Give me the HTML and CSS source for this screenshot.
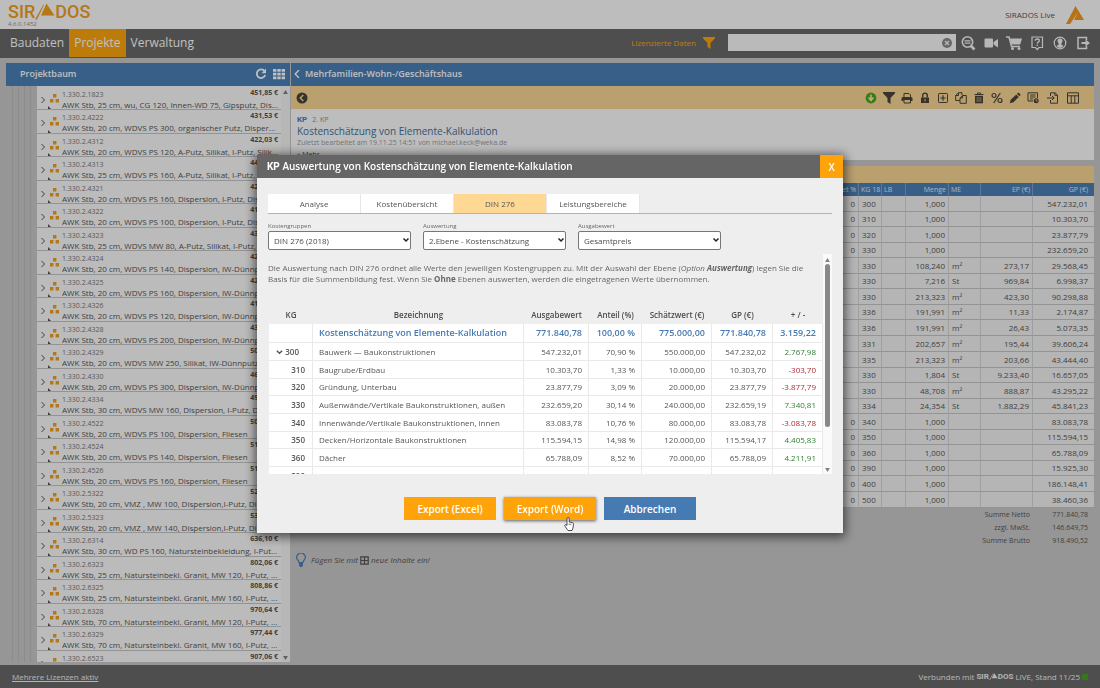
FILE: index.html
```html
<!DOCTYPE html>
<html lang="de">
<head>
<meta charset="utf-8">
<title>SIRADOS Live</title>
<link rel="stylesheet" href="styles.css">
</head>
<body>
<svg class="sprite" aria-hidden="true">
  <symbol id="chev" viewBox="0 0 6 8"><path d="M1.5 1l3 3-3 3" fill="none" stroke="currentColor" stroke-width="1"/></symbol>
  <symbol id="cubes" viewBox="0 0 9 9"><path d="M3 0h3.4v3.4H3zM0 5h3.4v3.4H0zM5.6 5H9v3.4H5.6z" fill="currentColor"/></symbol>
  <symbol id="corner" viewBox="0 0 4 4"><path d="M0 0l4 4H0z" fill="currentColor"/></symbol>
  <symbol id="tri" viewBox="0 0 20 16"><path d="M11.500 0L19.500 12H6zM9 1.500L2 16H0L8.500 1z" fill="currentColor"/></symbol>
  <symbol id="funnel" viewBox="0 0 12 12"><path d="M0 0h12v1.200L7.500 6v6L4.500 10V6L0 1.200z" fill="currentColor"/></symbol>
</svg>

<header class="brandbar">
  <div class="brand">
    <div class="logo"><span>SIR</span><svg><use href="#tri"/></svg><span>DOS</span></div>
    <small>4.6.0.1452</small>
  </div>
  <div class="product">SIRADOS Live
    <svg viewBox="0 0 18 18"><path d="M9.500 0L18 14H8l3.800-7.500L7.500 13l-3.400 5H0z" fill="currentColor"/></svg>
  </div>
</header>

<nav class="mainnav">
  <a href="#">Baudaten</a><a href="#" class="active">Projekte</a><a href="#">Verwaltung</a>
  <div class="tools">
    <span class="licensed">Lizenzierte Daten</span>
    <svg class="filter"><use href="#funnel"/></svg>
    <div class="search">
      <input type="text" aria-label="Suche">
      <svg viewBox="0 0 10 10"><circle cx="5" cy="5" r="5" fill="#8a8a8a"/><path d="M3 3l4 4M7 3l-4 4" stroke="#f4f4f4" stroke-width="1.400"/></svg>
    </div>
    <div class="navicons">
      <button aria-label="Detailsuche"><svg viewBox="0 0 16 16"><circle cx="7.500" cy="7" r="5.200" fill="none" stroke="currentColor" stroke-width="1.600"/><path d="M4.500 5.800h6M4.500 8.200h6" stroke="currentColor" stroke-width="1.200"/><path d="M10.500 10.500l4 4" stroke="currentColor" stroke-width="2.600"/></svg></button>
      <button aria-label="Video"><svg viewBox="0 0 16 16"><path d="M1.500 4.500q0-1 1-1H9q1 0 1 1v7q0 1-1 1H2.500q-1 0-1-1zM10.500 7L15 4v8.500L10.500 9.500z" fill="currentColor"/></svg></button>
      <button aria-label="Warenkorb"><svg viewBox="0 0 16 16"><path d="M0 2h3l2.500 9.500H14" fill="none" stroke="currentColor" stroke-width="1.500"/><path d="M3.800 3.500H16L14.200 9.500H5.500z" fill="currentColor"/><circle cx="6.500" cy="13.500" r="1.500" fill="currentColor"/><circle cx="13" cy="13.500" r="1.500" fill="currentColor"/></svg></button>
      <button aria-label="Hilfe"><svg viewBox="0 0 16 16"><path d="M3 2h10.500v10.500H10L8.200 14.500 6.500 12.500H3z" fill="none" stroke="currentColor" stroke-width="1.200"/><path d="M6.300 5.700q0-1.700 2-1.700t2 1.600q0 1-1 1.500t-1 1.500M8.300 9.600v1.500" fill="none" stroke="currentColor" stroke-width="1.300"/></svg></button>
      <button aria-label="Benutzer"><svg viewBox="0 0 16 16"><circle cx="8" cy="8" r="5.800" fill="none" stroke="currentColor" stroke-width="1.200"/><path d="M8 3.500a2.300 2.500 0 0 1 1.600 4.500l-.3 1.600 2.200 1.500Q10 13 8 13t-3.500-1.900l2.200-1.500L6.400 8A2.300 2.500 0 0 1 8 3.500z" fill="currentColor"/></svg></button>
      <button aria-label="Abmelden"><svg viewBox="0 0 16 16"><path d="M11.500 5V2.500H3v11h8.500V11" fill="none" stroke="currentColor" stroke-width="1.500"/><path d="M6.500 7h4V4.500L15 8l-4.500 3.500V9h-4z" fill="currentColor"/></svg></button>
    </div>
  </div>
</nav>

<main class="workspace">
  <section class="tree">
    <header class="panelhead">
      <h2>Projektbaum</h2>
      <button aria-label="Aktualisieren"><svg viewBox="0 0 12 12"><path d="M9.600 3.200A4.300 4.300 0 1 0 10.200 7" fill="none" stroke="currentColor" stroke-width="1.800"/><path d="M11 .5v4.700H6.500z" fill="currentColor"/></svg></button>
      <button aria-label="Kacheln"><svg viewBox="0 0 12 12"><path d="M0 1h3.400v2.800H0zM4.300 1h3.400v2.800H4.300zM8.600 1H12v2.800H8.600zM0 4.700h3.400v2.800H0zM4.300 4.700h3.400v2.800H4.300zM8.600 4.700H12v2.800H8.600zM0 8.400h3.400v2.800H0zM4.300 8.400h3.400v2.800H4.300zM8.600 8.400H12v2.800H8.600z" fill="currentColor"/></svg></button>
    </header>
    <div class="treebody">
      <div class="guides"><i></i><i></i><i></i><i></i></div>
      <ul class="items">
        <li><svg class="chev"><use href="#chev"/></svg><svg class="cubes"><use href="#cubes"/></svg><svg class="corner"><use href="#corner"/></svg><span class="code">1.330.2.1823</span><b>451,85 €</b><p>AWK Stb, 25 cm, wu, CG 120, Innen-WD 75, Gipsputz, Dis...</p></li>
        <li><svg class="chev"><use href="#chev"/></svg><svg class="cubes"><use href="#cubes"/></svg><svg class="corner"><use href="#corner"/></svg><span class="code">1.330.2.4222</span><b>431,53 €</b><p>AWK Stb, 20 cm, WDVS PS 300, organischer Putz, Disper...</p></li>
        <li><svg class="chev"><use href="#chev"/></svg><svg class="cubes"><use href="#cubes"/></svg><svg class="corner"><use href="#corner"/></svg><span class="code">1.330.2.4312</span><b>422,03 €</b><p>AWK Stb, 20 cm, WDVS PS 120, A-Putz, Silikat, I-Putz, Silik...</p></li>
        <li><svg class="chev"><use href="#chev"/></svg><svg class="cubes"><use href="#cubes"/></svg><svg class="corner"><use href="#corner"/></svg><span class="code">1.330.2.4313</span><b>441,20 €</b><p>AWK Stb, 25 cm, WDVS PS 160, A-Putz, Silikat, I-Putz, Silik...</p></li>
        <li><svg class="chev"><use href="#chev"/></svg><svg class="cubes"><use href="#cubes"/></svg><svg class="corner"><use href="#corner"/></svg><span class="code">1.330.2.4321</span><b>427,15 €</b><p>AWK Stb, 20 cm, WDVS PS 160, Dispersion, I-Putz, Disper...</p></li>
        <li><svg class="chev"><use href="#chev"/></svg><svg class="cubes"><use href="#cubes"/></svg><svg class="corner"><use href="#corner"/></svg><span class="code">1.330.2.4322</span><b>411,90 €</b><p>AWK Stb, 20 cm, WDVS PS 100, Dispersion, I-Putz, Disper...</p></li>
        <li><svg class="chev"><use href="#chev"/></svg><svg class="cubes"><use href="#cubes"/></svg><svg class="corner"><use href="#corner"/></svg><span class="code">1.330.2.4323</span><b>432,60 €</b><p>AWK Stb, 25 cm, WDVS MW 80, A-Putz, Silikat, I-Putz, Silik...</p></li>
        <li><svg class="chev"><use href="#chev"/></svg><svg class="cubes"><use href="#cubes"/></svg><svg class="corner"><use href="#corner"/></svg><span class="code">1.330.2.4324</span><b>421,75 €</b><p>AWK Stb, 20 cm, WDVS PS 140, Dispersion, IW-Dünnputz...</p></li>
        <li><svg class="chev"><use href="#chev"/></svg><svg class="cubes"><use href="#cubes"/></svg><svg class="corner"><use href="#corner"/></svg><span class="code">1.330.2.4325</span><b>425,30 €</b><p>AWK Stb, 20 cm, WDVS PS 160, Dispersion, IW-Dünnputz...</p></li>
        <li><svg class="chev"><use href="#chev"/></svg><svg class="cubes"><use href="#cubes"/></svg><svg class="corner"><use href="#corner"/></svg><span class="code">1.330.2.4326</span><b>418,40 €</b><p>AWK Stb, 20 cm, WDVS PS 120, Dispersion, IW-Dünnputz...</p></li>
        <li><svg class="chev"><use href="#chev"/></svg><svg class="cubes"><use href="#cubes"/></svg><svg class="corner"><use href="#corner"/></svg><span class="code">1.330.2.4328</span><b>430,10 €</b><p>AWK Stb, 20 cm, WDVS PS 200, Dispersion, IW-Dünnputz...</p></li>
        <li><svg class="chev"><use href="#chev"/></svg><svg class="cubes"><use href="#cubes"/></svg><svg class="corner"><use href="#corner"/></svg><span class="code">1.330.2.4329</span><b>503,25 €</b><p>AWK Stb, 20 cm, WDVS MW 250, Silikat, IW-Dünnputz, Sil...</p></li>
        <li><svg class="chev"><use href="#chev"/></svg><svg class="cubes"><use href="#cubes"/></svg><svg class="corner"><use href="#corner"/></svg><span class="code">1.330.2.4330</span><b>462,80 €</b><p>AWK Stb, 20 cm, WDVS PS 300, Dispersion, IW-Dünnputz...</p></li>
        <li><svg class="chev"><use href="#chev"/></svg><svg class="cubes"><use href="#cubes"/></svg><svg class="corner"><use href="#corner"/></svg><span class="code">1.330.2.4334</span><b>497,35 €</b><p>AWK Stb, 30 cm, WDVS MW 160, Dispersion, I-Putz, Disp...</p></li>
        <li><svg class="chev"><use href="#chev"/></svg><svg class="cubes"><use href="#cubes"/></svg><svg class="corner"><use href="#corner"/></svg><span class="code">1.330.2.4522</span><b>508,70 €</b><p>AWK Stb, 20 cm, WDVS PS 100, Dispersion, Fliesen</p></li>
        <li><svg class="chev"><use href="#chev"/></svg><svg class="cubes"><use href="#cubes"/></svg><svg class="corner"><use href="#corner"/></svg><span class="code">1.330.2.4524</span><b>512,45 €</b><p>AWK Stb, 20 cm, WDVS PS 140, Dispersion, Fliesen</p></li>
        <li><svg class="chev"><use href="#chev"/></svg><svg class="cubes"><use href="#cubes"/></svg><svg class="corner"><use href="#corner"/></svg><span class="code">1.330.2.4526</span><b>516,20 €</b><p>AWK Stb, 20 cm, WDVS PS 160, Dispersion, Fliesen</p></li>
        <li><svg class="chev"><use href="#chev"/></svg><svg class="cubes"><use href="#cubes"/></svg><svg class="corner"><use href="#corner"/></svg><span class="code">1.330.2.5322</span><b>521,60 €</b><p>AWK Stb, 20 cm, VMZ , MW 100, Dispersion,I-Putz, Disp...</p></li>
        <li><svg class="chev"><use href="#chev"/></svg><svg class="cubes"><use href="#cubes"/></svg><svg class="corner"><use href="#corner"/></svg><span class="code">1.330.2.5323</span><b>530,95 €</b><p>AWK Stb, 20 cm, VMZ , MW 140, Dispersion,I-Putz, Disp...</p></li>
        <li><svg class="chev"><use href="#chev"/></svg><svg class="cubes"><use href="#cubes"/></svg><svg class="corner"><use href="#corner"/></svg><span class="code">1.330.2.6314</span><b>636,10 €</b><p>AWK Stb, 30 cm, WD PS 160, Natursteinbekleidung, I-Put...</p></li>
        <li><svg class="chev"><use href="#chev"/></svg><svg class="cubes"><use href="#cubes"/></svg><svg class="corner"><use href="#corner"/></svg><span class="code">1.330.2.6323</span><b>802,06 €</b><p>AWK Stb, 25 cm, Natursteinbekl. Granit, MW 120, I-Putz, ...</p></li>
        <li><svg class="chev"><use href="#chev"/></svg><svg class="cubes"><use href="#cubes"/></svg><svg class="corner"><use href="#corner"/></svg><span class="code">1.330.2.6325</span><b>808,86 €</b><p>AWK Stb, 25 cm, Natursteinbekl. Granit, MW 160, I-Putz, ...</p></li>
        <li><svg class="chev"><use href="#chev"/></svg><svg class="cubes"><use href="#cubes"/></svg><svg class="corner"><use href="#corner"/></svg><span class="code">1.330.2.6328</span><b>970,64 €</b><p>AWK Stb, 70 cm, Natursteinbekl. Granit, MW 120, I-Putz, ...</p></li>
        <li><svg class="chev"><use href="#chev"/></svg><svg class="cubes"><use href="#cubes"/></svg><svg class="corner"><use href="#corner"/></svg><span class="code">1.330.2.6329</span><b>977,44 €</b><p>AWK Stb, 70 cm, Natursteinbekl. Granit, MW 160, I-Putz, ...</p></li>
        <li><svg class="chev"><use href="#chev"/></svg><svg class="cubes"><use href="#cubes"/></svg><svg class="corner"><use href="#corner"/></svg><span class="code">1.330.2.6523</span><b>907,06 €</b></li>
      </ul>
      <div class="scroll"><svg viewBox="0 0 6 5"><path d="M3 0l3 5H0z"/></svg><svg viewBox="0 0 6 5"><path d="M0 0h6L3 5z"/></svg></div>
    </div>
  </section>

  <section class="project">
    <header class="panelhead titlehead">
      <button aria-label="Zurück"><svg viewBox="0 0 6 8"><path d="M5 0L1.200 4 5 8" fill="none" stroke="currentColor" stroke-width="1.400"/></svg></button>
      <h2>Mehrfamilien-Wohn-/Geschäftshaus</h2>
    </header>
    <div class="toolbar">
      <button class="back" aria-label="Vorheriges"><svg viewBox="0 0 12 12"><circle cx="6" cy="6" r="5.500" fill="currentColor"/><path d="M7.300 3L4.300 6l3 3" fill="none" stroke="#f8d595" stroke-width="1.500"/></svg></button>
      <div class="icons">
        <button aria-label="Herunterladen"><svg viewBox="0 0 12 12"><circle cx="6" cy="6" r="5.400" fill="#46a818"/><path d="M6 2.500v5M3.500 5.500L6 8.500l2.500-3" fill="none" stroke="#f8e5b5" stroke-width="1.600"/></svg></button>
        <button aria-label="Filter"><svg><use href="#funnel"/></svg></button>
        <button aria-label="Drucken"><svg viewBox="0 0 12 12"><path d="M3 5V1.500h5L9.500 3v2" fill="none" stroke="currentColor"/><path d="M.5 9V6.500q0-1.500 1.500-1.500h8q1.500 0 1.500 1.500V9H9.500V8h-7v1z" fill="currentColor"/><path d="M3 8v3h6.500V8" fill="none" stroke="currentColor"/></svg></button>
        <button aria-label="Sperren"><svg viewBox="0 0 12 12"><path d="M2 5.500h8V11H2z" fill="currentColor"/><path d="M3.700 5.500V3.400a2.300 2.300 0 0 1 4.600 0v2.100" fill="none" stroke="currentColor" stroke-width="1.400"/><path d="M6 7v2.500" stroke="#f8d595"/></svg></button>
        <button aria-label="Hinzufügen"><svg viewBox="0 0 12 12"><rect x="1.500" y="1.500" width="9" height="9" rx=".8" fill="none" stroke="currentColor"/><path d="M6 3.300v5.400M3.300 6h5.400" stroke="currentColor" stroke-width="1.200"/></svg></button>
        <button aria-label="Kopieren"><svg viewBox="0 0 12 12"><path d="M5 8.500H.7V3.500L3.500.7H7V3M.7 3.500h2.800V.7M5 11.300V6l2.600-2.500h3.700v7.800zM5 6h2.600V3.500" fill="none" stroke="currentColor"/></svg></button>
        <button aria-label="Löschen"><svg viewBox="0 0 12 12"><path d="M1.500 2.500h9M4.500 2.300V1h3v1.300" fill="none" stroke="currentColor"/><path d="M2 3.800h8V11.300H2z" fill="currentColor"/><path d="M4.200 5v5M6 5v5M7.800 5v5" stroke="#d9ba82" stroke-width=".7"/></svg></button>
        <button aria-label="Prozent"><svg viewBox="0 0 12 12"><circle cx="3" cy="3.500" r="2" fill="none" stroke="currentColor" stroke-width="1.200"/><circle cx="9" cy="8.500" r="2" fill="none" stroke="currentColor" stroke-width="1.200"/><path d="M9.300 1L2.700 11" stroke="currentColor" stroke-width="1.200"/></svg></button>
        <button aria-label="Bearbeiten"><svg viewBox="0 0 12 12"><path d="M.8 11.200l.9-3.500 5.600-5.300 2.500 2.500-5.400 5.400zM8 1.700l.7-.7q.7-.5 1.300 0l1.200 1.200q.5.600 0 1.200l-.8.800z" fill="currentColor"/></svg></button>
        <button aria-label="Protokoll"><svg viewBox="0 0 12 12"><path d="M6 9H1V.8h9.500V6M3 3h5.500M3 5h5.500M3 7h3" fill="none" stroke="currentColor"/><circle cx="9.200" cy="8.800" r="2.500" fill="currentColor"/><path d="M9.200 7v2h1.500" fill="none" stroke="#f8d595" stroke-width=".7"/></svg></button>
      </div>
      <div class="icons wide">
        <button aria-label="Importieren"><svg viewBox="0 0 12 12"><path d="M3.500 4V.8H8L10.500 3v8.200h-7V8M0 6h7M5 4l2.200 2L5 8M7.800.8v2.500h2.700" fill="none" stroke="currentColor"/></svg></button>
        <button aria-label="Spalten"><svg viewBox="0 0 12 12"><path d="M.5.800h11v10.400H.5zM.5 3.800h11M4.200 3.800v7.400M7.800 3.800v7.400" fill="none" stroke="currentColor"/></svg></button>
      </div>
    </div>
    <div class="summary">
      <div class="kind"><b>KP</b><span>2. KP</span></div>
      <h1>Kostenschätzung von Elemente-Kalkulation</h1>
      <p>Zuletzt bearbeitet am 19.11.25 14:51 von michael.keck@weka.de</p>
      <a href="#">» Mehr</a>
    </div>
    <div class="gridbar"></div>
    <table class="positions">
      <colgroup><col><col class="w-pct"><col class="w-kg"><col class="w-lb"><col class="w-qty"><col class="w-me"><col class="w-ep"><col class="w-gp"></colgroup>
      <thead><tr><th></th><th class="n">Budget %</th><th>KG 18</th><th>LB</th><th class="n">Menge</th><th>ME</th><th class="n">EP (€)</th><th class="n">GP (€)</th></tr></thead>
      <tbody>
        <tr><td></td><td>0</td><td>300</td><td></td><td>1,000</td><td></td><td></td><td>547.232,01</td></tr>
        <tr><td></td><td>0</td><td>310</td><td></td><td>1,000</td><td></td><td></td><td>10.303,70</td></tr>
        <tr><td></td><td>0</td><td>320</td><td></td><td>1,000</td><td></td><td></td><td>23.877,79</td></tr>
        <tr><td></td><td>0</td><td>330</td><td></td><td>1,000</td><td></td><td></td><td>232.659,20</td></tr>
        <tr><td></td><td></td><td>330</td><td></td><td>108,240</td><td>m²</td><td>273,17</td><td>29.568,45</td></tr>
        <tr><td></td><td></td><td>330</td><td></td><td>7,216</td><td>St</td><td>969,84</td><td>6.998,37</td></tr>
        <tr><td></td><td></td><td>330</td><td></td><td>213,323</td><td>m²</td><td>423,30</td><td>90.298,88</td></tr>
        <tr><td></td><td></td><td>336</td><td></td><td>191,991</td><td>m²</td><td>11,33</td><td>2.174,87</td></tr>
        <tr><td></td><td></td><td>336</td><td></td><td>191,991</td><td>m²</td><td>26,43</td><td>5.073,35</td></tr>
        <tr><td></td><td></td><td>331</td><td></td><td>202,657</td><td>m²</td><td>195,44</td><td>39.606,24</td></tr>
        <tr><td></td><td></td><td>335</td><td></td><td>213,323</td><td>m²</td><td>203,66</td><td>43.444,40</td></tr>
        <tr><td></td><td></td><td>330</td><td></td><td>1,804</td><td>St</td><td>9.233,40</td><td>16.657,05</td></tr>
        <tr><td></td><td></td><td>330</td><td></td><td>48,708</td><td>m²</td><td>888,87</td><td>43.295,22</td></tr>
        <tr><td></td><td></td><td>334</td><td></td><td>24,354</td><td>St</td><td>1.882,29</td><td>45.841,23</td></tr>
        <tr><td></td><td>0</td><td>340</td><td></td><td>1,000</td><td></td><td></td><td>83.083,78</td></tr>
        <tr><td></td><td>0</td><td>350</td><td></td><td>1,000</td><td></td><td></td><td>115.594,15</td></tr>
        <tr><td></td><td>0</td><td>360</td><td></td><td>1,000</td><td></td><td></td><td>65.788,09</td></tr>
        <tr><td></td><td>0</td><td>390</td><td></td><td>1,000</td><td></td><td></td><td>15.925,30</td></tr>
        <tr><td></td><td>0</td><td>400</td><td></td><td>1,000</td><td></td><td></td><td>186.148,41</td></tr>
        <tr><td></td><td>0</td><td>500</td><td></td><td>1,000</td><td></td><td></td><td>38.460,36</td></tr>
      </tbody>
    </table>
    <dl class="totals">
      <dt>Summe Netto</dt><dd>771.840,78</dd>
      <dt>zzgl. MwSt.</dt><dd>146.649,75</dd>
      <dt>Summe Brutto</dt><dd>918.490,52</dd>
    </dl>
    <p class="hint">
      <svg class="bulb" viewBox="0 0 10 14"><path d="M3 9.500Q3 8.300 1.800 7A4.200 4.200 0 1 1 8.200 7Q7 8.300 7 9.500z" fill="none" stroke="currentColor" stroke-width="1.200"/><path d="M3 10h4v2.500L5.800 14H4.200L3 12.500z" fill="currentColor"/></svg>
      Fügen Sie mit <svg class="plus" viewBox="0 0 9 9"><path d="M.8.800h7.400v7.400H.800zM4.500.800v7.400M.800 4.500h7.400" fill="none" stroke="currentColor" stroke-width="1.200"/></svg> neue Inhalte ein!
    </p>
  </section>
</main>

<footer class="statusbar">
  <a href="#">Mehrere Lizenzen aktiv</a>
  <div>Verbunden mit <span class="minilogo"><b>SIR</b><svg><use href="#tri"/></svg><b>DOS</b></span> LIVE, Stand 11/25 <i></i></div>
</footer>

<div class="backdrop">
  <div class="dialog" role="dialog" aria-labelledby="dlg-title">
    <header class="dlghead">
      <h2 id="dlg-title"><b>KP</b> Auswertung von Kostenschätzung von Elemente-Kalkulation</h2>
      <button aria-label="Schließen">X</button>
    </header>
    <div class="dlgbody">
      <div class="tabs" role="tablist">
        <button role="tab">Analyse</button><button role="tab">Kostenübersicht</button><button role="tab" class="active" aria-selected="true">DIN 276</button><button role="tab">Leistungsbereiche</button>
      </div>
      <div class="fields">
        <div class="field"><label for="groups">Kostengruppen</label><select id="groups"><option>DIN 276 (2018)</option></select><svg viewBox="0 0 8 6"><path d="M1.500 1.500L4 4l2.500-2.500" fill="none" stroke="currentColor" stroke-width="1.500"/></svg></div>
        <div class="field"><label for="level">Auswertung</label><select id="level"><option>2.Ebene - Kostenschätzung</option></select><svg viewBox="0 0 8 6"><path d="M1.500 1.500L4 4l2.500-2.500" fill="none" stroke="currentColor" stroke-width="1.500"/></svg></div>
        <div class="field"><label for="value">Ausgabewert</label><select id="value"><option>Gesamtpreis</option></select><svg viewBox="0 0 8 6"><path d="M1.500 1.500L4 4l2.500-2.500" fill="none" stroke="currentColor" stroke-width="1.500"/></svg></div>
      </div>
      <div class="viewport">
        <div class="content">
          <p>Die Auswertung nach DIN 276 ordnet alle Werte den jeweiligen Kostengruppen zu. Mit der Auswahl der Ebene (<i>Option <b>Auswertung</b></i>) legen Sie die Basis für die Summenbildung fest. Wenn Sie <b>Ohne</b> Ebenen auswerten, werden die eingetragenen Werte übernommen.</p>
          <table class="costs">
            <colgroup><col class="c-kg"><col><col class="c-out"><col class="c-part"><col class="c-est"><col class="c-gp"><col class="c-diff"></colgroup>
            <thead><tr><th>KG</th><th>Bezeichnung</th><th>Ausgabewert</th><th>Anteil (%)</th><th>Schätzwert (€)</th><th>GP (€)</th><th>+ / -</th></tr></thead>
            <tbody>
              <tr class="total"><td></td><td>Kostenschätzung von Elemente-Kalkulation</td><td>771.840,78</td><td>100,00 %</td><td>775.000,00</td><td>771.840,78</td><td>3.159,22</td></tr>
              <tr class="group"><td><svg viewBox="0 0 8 6"><path d="M1 1.500L4 4.500l3-3" fill="none" stroke="currentColor" stroke-width="1.600"/></svg> 300</td><td>Bauwerk — Baukonstruktionen</td><td>547.232,01</td><td>70,90 %</td><td>550.000,00</td><td>547.232,02</td><td class="pos">2.767,98</td></tr>
              <tr><td>310</td><td>Baugrube/Erdbau</td><td>10.303,70</td><td>1,33 %</td><td>10.000,00</td><td>10.303,70</td><td class="neg">-303,70</td></tr>
              <tr><td>320</td><td>Gründung, Unterbau</td><td>23.877,79</td><td>3,09 %</td><td>20.000,00</td><td>23.877,79</td><td class="neg">-3.877,79</td></tr>
              <tr><td>330</td><td>Außenwände/Vertikale Baukonstruktionen, außen</td><td>232.659,20</td><td>30,14 %</td><td>240.000,00</td><td>232.659,19</td><td class="pos">7.340,81</td></tr>
              <tr><td>340</td><td>Innenwände/Vertikale Baukonstruktionen, innen</td><td>83.083,78</td><td>10,76 %</td><td>80.000,00</td><td>83.083,78</td><td class="neg">-3.083,78</td></tr>
              <tr><td>350</td><td>Decken/Horizontale Baukonstruktionen</td><td>115.594,15</td><td>14,98 %</td><td>120.000,00</td><td>115.594,17</td><td class="pos">4.405,83</td></tr>
              <tr><td>360</td><td>Dächer</td><td>65.788,09</td><td>8,52 %</td><td>70.000,00</td><td>65.788,09</td><td class="pos">4.211,91</td></tr>
              <tr><td>390</td><td>Sonstige Maßnahmen für Baukonstruktionen</td><td>15.925,30</td><td>2,06 %</td><td>10.000,00</td><td>15.925,30</td><td class="neg">-5.925,30</td></tr>
            </tbody>
          </table>
        </div>
        <div class="scroll"><svg viewBox="0 0 6 5"><path d="M3 0l3 5H0z"/></svg><i></i><svg viewBox="0 0 6 5"><path d="M0 0h6L3 5z"/></svg></div>
      </div>
      <div class="actions">
        <button>Export (Excel)</button>
        <button class="hover">Export (Word)<svg class="cursor" viewBox="0 0 10 14"><path d="M3 8V1.800q0-1.300 1.100-1.300t1.100 1.300V5l3.300.7q1.100.3 1 1.500L9 11l-1 2.500H4L1 9.300Q.3 8.200 1.200 7.700T3 8.500z" fill="#fff" stroke="#222" stroke-width=".8"/><path d="M5.200 6.500V8M6.800 6.700V8.200" stroke="#222" stroke-width=".6"/></svg></button>
        <button class="cancel">Abbrechen</button>
      </div>
    </div>
  </div>
</div>
</body>
</html>
```

FILE: styles.css
```css
* { box-sizing: border-box; margin: 0; padding: 0; }
body {
  display: flex; flex-direction: column; height: 100vh; overflow: hidden;
  font: 8px/12px "Open Sans", "Noto Sans", sans-serif; color: #555; background: #c9c9c9;
}
button { font: inherit; color: inherit; background: none; border: 0; display: block; }
svg { display: block; flex: none; }
ul { list-style: none; }
.sprite { position: absolute; width: 0; height: 0; }

.brandbar { display: flex; justify-content: space-between; height: 29px; background: #fcfcfc; padding: 0 16px 0 8px; }
.brand { padding-top: 3px; }
.logo { display: flex; align-items: center; height: 18px; color: #f0a020; font: 500 18px/18px Roboto, "Liberation Sans", sans-serif; }
.logo svg { width: 20px; height: 17px; align-self: flex-start; }
.brand small { display: block; font-size: 6px; line-height: 7px; color: #909090; }
.product { display: flex; align-items: center; gap: 11px; color: #555; }
.product svg { width: 18px; height: 18px; color: #f3981c; }

.mainnav { display: flex; height: 29px; background: #696969; padding-left: 5px; }
.mainnav a { display: flex; align-items: center; height: 28px; padding: 0 5px; color: #fff; font-size: 12px; text-decoration: none; }
.mainnav a.active { background: #fca60c; }
.tools { display: flex; align-items: center; margin-left: auto; padding: 0 9px 2px 0; color: #f4f4f4; }
.licensed { color: #fca60c; }
.filter { width: 12px; height: 12px; margin: 0 13px 0 7px; color: #fca60c; }
.search { display: flex; align-items: center; width: 228px; height: 17px; padding-right: 4px; background: #f8f8f8; }
.search input { flex: 1; border: 0; background: none; font: inherit; min-width: 0; }
.search svg { width: 10px; height: 10px; }
.navicons { display: flex; gap: 7px; padding-left: 4px; }
.navicons svg { width: 16px; height: 16px; }

.workspace { display: flex; flex: 1; min-height: 0; gap: 1px; padding: 5px 6px 0; }
.panelhead { display: flex; align-items: center; gap: 6px; height: 23px; padding: 0 5px 1px 14px; background: #4b7fb5; color: #fff; }
.panelhead h2 { font-size: 9px; font-weight: 600; }
.panelhead svg { width: 12px; height: 12px; }
.tree { display: flex; flex-direction: column; width: 284px; }
.tree h2 { flex: 1; }
.treebody { display: flex; flex: 1; min-height: 0; margin-bottom: 3px; }
.guides { display: flex; gap: 5px; width: 31px; padding-left: 6px; }
.guides i { width: 1px; background: #bbb; }
.items { flex: 1; overflow: hidden; background: #fafafa; padding-top: 1px; }
.items li {
  display: grid; grid-template: 12px 11px / 9px 16px 1fr auto; position: relative;
  height: 24px; padding-right: 3px; border-bottom: 1px solid #c4c4c4; line-height: 12px;
}
.items li:nth-child(odd) { height: 23px; }
.items .chev { width: 6px; height: 8px; grid-area: 1 / 1 / 3; align-self: center; margin-left: 3px; margin-top: 2px; }
.items .cubes { width: 9px; height: 9px; grid-area: 1 / 2 / 3; align-self: center; justify-self: center; color: #f0a020; }
.items .corner { width: 3px; height: 3px; position: absolute; left: 11px; bottom: 0; }
.code { grid-area: 1 / 3; font-size: 7px; line-height: 15px; color: #777; }
.items b { grid-area: 1 / 4; font-size: 7px; }
.items p { grid-area: 2 / 3 / 3 / 5; white-space: nowrap; overflow: hidden; line-height: 12px; }
.scroll { display: flex; flex-direction: column; justify-content: space-between; align-items: center; width: 9px; padding: 4px 0 2px; background: #f4f4f4; }
.scroll svg { width: 5px; height: 4px; fill: #808080; }

.project { flex: 1; min-width: 0; }
.titlehead { padding-left: 3px; gap: 5px; }
.titlehead svg { width: 6px; height: 8px; }
.toolbar { display: flex; align-items: center; gap: 8px; height: 23px; padding: 0 15px 0 5px; background: #f8d595; color: #4a4438; }
.toolbar svg { width: 12px; height: 12px; }
.icons { display: flex; gap: 6px; }
.icons.wide { gap: 8px; }
.back { margin-right: auto; }
.summary { height: 51px; padding: 5px 6px 0; background: #fcfcfc; overflow: hidden; }
.kind { display: flex; gap: 5px; line-height: 11px; color: #909090; font-size: 7px; }
.kind b { font: bold 8px/11px Roboto, "Liberation Sans", sans-serif; color: #4b7fb5; }
.summary h1 { font-size: 10px; line-height: 13px; font-weight: 400; color: #4470a0; }
.summary p { font-size: 7px; line-height: 10px; color: #999; }
.summary a { color: #555; text-decoration: none; font-size: 7px; }
.gridbar { height: 17px; margin-top: 6px; background: #f8d595; }
.positions { width: 100%; table-layout: fixed; border-collapse: separate; border-spacing: 0; }
.w-pct { width: 60px; } .w-kg { width: 23px; } .w-lb { width: 24px; } .w-qty { width: 43px; }
.w-me { width: 32px; } .w-ep { width: 52px; } .w-gp { width: 61px; }
.positions th { height: 13px; background: #4b7fb5; color: #e8eef5; font-weight: 400; font-size: 7px; line-height: 12px; text-align: left; padding: 0 2px; border-right: 1px solid #7ba0c8; white-space: nowrap; }
.positions td { height: 15px; background: #f2f2f2; border-right: 1px solid #d4d4d4; border-bottom: 1px solid #c4c4c4; padding: 0 3px; line-height: 14px; text-align: right; }
.positions tr:nth-child(odd) td, .positions tr:nth-child(10n) td { height: 16px; }
.positions td:nth-child(3), .positions td:nth-child(6) { text-align: left; }
.positions th.n { text-align: right; }
.positions td:last-child, .positions th:last-child { padding-right: 6px; border-right: 0; }
.totals { display: grid; grid-template-columns: 1fr 58px; row-gap: 1px; padding: 1px 6px 0 0; text-align: right; line-height: 12px; font-size: 7px; }
.hint { display: flex; align-items: center; gap: 2px; padding: 6px 5px; font-style: italic; }
.bulb { width: 10px; height: 14px; margin-right: 3px; color: #4b7fb5; }
.plus { width: 9px; height: 9px; }

.statusbar { display: flex; align-items: center; justify-content: space-between; height: 23px; padding: 0 12px; background: #696969; color: #f0f0f0; }
.statusbar a { color: inherit; }
.statusbar div { display: flex; align-items: center; gap: 2px; }
.statusbar i { width: 6px; height: 6px; background: #48a020; }
.minilogo { display: flex; align-items: center; font: 8px/12px Roboto, "Liberation Sans", sans-serif; }
.minilogo svg { width: 9px; height: 7px; }

.backdrop { position: fixed; inset: 0; display: flex; align-items: center; justify-content: center; background: rgba(0, 0, 0, .25); }
.dialog { width: 586px; max-width: 96vw; background: #eee; box-shadow: 0 2px 10px 2px rgba(0, 0, 0, .6); }
.dlghead { display: flex; justify-content: space-between; height: 23px; background: #656565; color: #fff; }
.dlghead h2 { padding-left: 10px; font-size: 10px; font-weight: 600; line-height: 23px; }
.dlghead b { font: bold 10px/22px Roboto, "Liberation Sans", sans-serif; }
.dlghead button { width: 23px; background: #ffa30a; font-size: 10px; font-weight: 600; }
.dlgbody { padding: 16px 11px 13px; }
.tabs { display: flex; border-bottom: 1px solid #9fb6d6; }
.tabs button { width: 93px; height: 19px; background: #fff; border-right: 1px solid #e6e6e6; color: #555; }
.tabs .active { background: #ffd894; }
.fields { display: flex; gap: 12px; margin-top: 7px; }
.field { position: relative; width: 143px; }
.field label { display: block; font-size: 6px; line-height: 10px; color: #666; }
.field select { appearance: none; display: block; width: 100%; height: 19px; padding: 0 5px; border: 1px solid #777; border-radius: 2px; background: #fff; color: #4c4c4c; font: inherit; }
.field svg { position: absolute; right: 1px; bottom: 7px; width: 8px; height: 6px; color: #222; }
.viewport { display: flex; height: 220px; margin-top: 4px; overflow: hidden; }
.content { flex: 1; overflow: hidden; padding-top: 8px; }
.content p { line-height: 11px; color: #666; padding-right: 10px; }
.viewport .scroll { gap: 2px; background: #fafafa; padding: 4px 0 2px; }
.viewport .scroll i { width: 5px; height: 163px; margin-bottom: auto; border-radius: 3px; background: #888; }
.costs { width: 100%; margin-top: 22px; table-layout: fixed; border-collapse: separate; border-spacing: 0; padding-left: 1px; }
.c-kg { width: 44px; } .c-out { width: 65px; } .c-part { width: 53px; } .c-est { width: 70px; } .c-gp { width: 61px; } .c-diff { width: 50px; }
.costs th { height: 18px; font-weight: 600; white-space: nowrap; color: #4c4c4c; }
.costs td { height: 18px; background: #fff; padding: 0 6px; line-height: 16px; text-align: right; border: solid #e9e9e9; border-width: 0 1px 1px 0; white-space: nowrap; }
.costs tr:nth-child(3n + 4) td { height: 17px; }
.costs td:first-child { font-weight: 600; padding-right: 7px; }
.costs .group td:first-child { padding-right: 13px; }
.group svg { display: inline-block; width: 7px; height: 6px; }
.costs td:nth-child(2) { text-align: left; }
.costs .total td { height: 19px; font-size: 9px; font-weight: 600; color: #467ab2; }
.costs .pos { color: #2f7d32; }
.costs .neg { color: #b02a37; }
.actions { display: flex; justify-content: center; gap: 8px; margin-top: 23px; }
.actions button { position: relative; width: 92px; height: 23px; background: #ffa30a; color: #fff; font-size: 10px; font-weight: 600; }
.actions .hover { box-shadow: 0 1px 3px rgba(0, 0, 0, .6); }
.actions .cancel { background: #467ab2; }
.cursor { position: absolute; left: 60px; top: 20px; width: 10px; height: 14px; }
```
